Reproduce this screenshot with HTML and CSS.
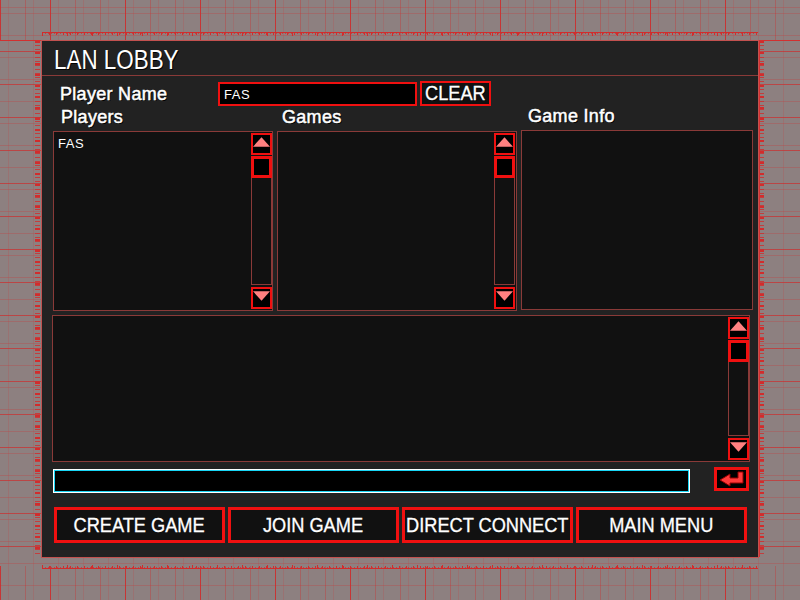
FILE: index.html
```html
<!DOCTYPE html>
<html lang="en">
<head>
    <meta charset="UTF-8">
    <title>LAN Lobby</title>
    <link rel="stylesheet" href="styles.css">
</head>
<body>
    <div class="strip strip-top"></div>
    <div class="strip strip-bottom"></div>
    <div class="strip strip-left"></div>
    <div class="strip strip-right"></div>
    <div class="ruler ruler-top"></div>
    <div class="ruler ruler-bottom"></div>
    <div class="ruler-v ruler-left"></div>
    <div class="ruler-v ruler-right"></div>

    <main class="lobby">
        <header class="title-bar"><h1>LAN LOBBY</h1></header>

        <div class="name-row">
            <label class="label name-label">Player Name</label>
            <div class="name-field">FAS</div>
            <button class="clear-btn"><span class="squeeze">CLEAR</span></button>
        </div>

        <div class="columns">
            <section class="col col-players">
                <h2 class="label">Players</h2>
                <div class="listbox">
                    <div class="list-text">FAS</div>
                    <div class="scroll">
                        <div class="arrow"><svg width="18" height="10" viewBox="0 0 18 10"><path d="M9 0 18 10H0Z"/></svg></div>
                        <div class="thumb"></div>
                        <div class="track"></div>
                        <div class="arrow arrow-down"><svg width="18" height="10" viewBox="0 0 18 10"><path d="M0 0H18L9 10Z"/></svg></div>
                    </div>
                </div>
            </section>
            <section class="col col-games">
                <h2 class="label">Games</h2>
                <div class="listbox">
                    <div class="list-text"></div>
                    <div class="scroll">
                        <div class="arrow"><svg width="18" height="10" viewBox="0 0 18 10"><path d="M9 0 18 10H0Z"/></svg></div>
                        <div class="thumb"></div>
                        <div class="track"></div>
                        <div class="arrow arrow-down"><svg width="18" height="10" viewBox="0 0 18 10"><path d="M0 0H18L9 10Z"/></svg></div>
                    </div>
                </div>
            </section>
            <section class="col col-info">
                <h2 class="label">Game Info</h2>
                <div class="listbox"></div>
            </section>
        </div>

        <div class="listbox chat-log">
            <div class="list-text"></div>
            <div class="scroll">
                <div class="arrow"><svg width="18" height="10" viewBox="0 0 18 10"><path d="M9 0 18 10H0Z"/></svg></div>
                <div class="thumb"></div>
                <div class="track"></div>
                <div class="arrow arrow-down"><svg width="18" height="10" viewBox="0 0 18 10"><path d="M0 0H18L9 10Z"/></svg></div>
            </div>
        </div>

        <div class="chat-row">
            <div class="chat-input"></div>
            <button class="send-btn">
                <svg width="26" height="16" viewBox="0 0 26 16"><path d="M24 1V12H11V15L1 9 11 3V7H19V1Z" fill="#ff3a3a" stroke="#900"/></svg>
            </button>
        </div>

        <nav class="menu">
            <button class="menu-btn"><span class="squeeze">CREATE GAME</span></button>
            <button class="menu-btn"><span class="squeeze">JOIN GAME</span></button>
            <button class="menu-btn"><span class="squeeze">DIRECT CONNECT</span></button>
            <button class="menu-btn"><span class="squeeze">MAIN MENU</span></button>
        </nav>
    </main>
</body>
</html>
```
FILE: styles.css
```css
* {
    box-sizing: border-box;
}
html, body {
    margin: 0;
    height: 600px;
    overflow: hidden;
}
body {
    position: relative;
    padding: 41px 42px 43px;
    font-family: "Liberation Sans", Arial, sans-serif;
    background-color: #8d8080;
    background-image:
        repeating-linear-gradient(90deg, rgba(200, 60, 60, 0.2) 0 1px, transparent 1px 25px),
        repeating-linear-gradient(0deg, rgba(200, 60, 60, 0.3) 0 1px, transparent 1px 22px);
    background-position: 8px 0, 0 8px;
}

/* grid strips outside the panel */
.strip {
    position: absolute;
}
.strip-top, .strip-bottom {
    left: 0;
    width: 800px;
    background-image:
        repeating-linear-gradient(90deg, rgba(205, 45, 45, 0.85) 0 1px, transparent 1px 75px),
        repeating-linear-gradient(90deg, rgba(205, 45, 45, 0.35) 0 1px, transparent 1px 25px);
    background-position: 50px 0, 0 0;
}
.strip-top {
    top: 0;
    height: 41px;
    border-bottom: 1px solid #d23030;
}
.strip-bottom {
    top: 566px;
    height: 34px;
}
.strip-left, .strip-right {
    top: 41px;
    height: 525px;
    width: 42px;
    background-image: repeating-linear-gradient(180deg, rgba(205, 45, 45, 0.7) 0 1px, transparent 1px 33px);
    background-position: 0 10px;
}
.strip-left {
    left: 0;
}
.strip-right {
    left: 759px;
}

/* tick strips round the panel */
.ruler {
    position: absolute;
    left: 42px;
    width: 716px;
    height: 4px;
    background-image:
        linear-gradient(#d22c2c, #d22c2c),
        repeating-linear-gradient(90deg, #d22c2c 0 1px, transparent 1px 25px),
        repeating-linear-gradient(90deg, #d22c2c 0 1px, transparent 1px 7px),
        repeating-linear-gradient(90deg, rgba(210, 44, 44, 0.7) 0 1px, transparent 1px 3px);
    background-repeat: no-repeat;
    background-size: 100% 1px, 100% 4px, 100% 3px, 100% 2px;
}
.ruler-top {
    top: 32px;
}
.ruler-bottom {
    top: 565px;
    transform: scaleY(-1);
}
.ruler-v {
    position: absolute;
    top: 41px;
    width: 5px;
    height: 516px;
    background-image:
        repeating-linear-gradient(180deg, #d22c2c 0 2px, transparent 2px 11px),
        repeating-linear-gradient(180deg, rgba(210, 44, 44, 0.8) 0 1px, transparent 1px 4px);
}
.ruler-left {
    left: 35px;
}
.ruler-right {
    left: 759px;
    border-left: 1px solid #d23030;
}

.lobby {
    position: relative;
    height: 516px;
    background: #222;
    box-shadow: 0 0 0 1px #c2514f;
    display: flex;
    flex-direction: column;
}

.title-bar {
    height: 35px;
    border-bottom: 1px solid #8a3a38;
    padding-left: 12px;
}
.title-bar h1 {
    display: inline-block;
    margin: 0;
    color: #fff;
    font-size: 27px;
    font-weight: normal;
    line-height: 38px;
    white-space: nowrap;
    transform: scaleX(0.83);
    transform-origin: left;
    text-shadow: 1px 1px 0 #000;
}

.label {
    margin: 0;
    color: #fff;
    font-size: 18px;
    font-weight: normal;
    line-height: 20px;
    letter-spacing: 0.3px;
    -webkit-text-stroke: 0.5px #fff;
    text-shadow: 1px 1px 0 #000;
}

.squeeze {
    display: inline-block;
    white-space: nowrap;
    transform: scaleX(0.91);
    -webkit-text-stroke: 0.3px #fff;
}

.name-row {
    display: flex;
    align-items: center;
    height: 25px;
    margin-top: 5px;
    padding-left: 18px;
}
.name-label {
    width: 158px;
}
.name-field {
    width: 199px;
    height: 24px;
    border: 2px solid #f01010;
    background: #000;
    color: #fff;
    font-size: 13px;
    line-height: 21px;
    letter-spacing: 0.6px;
    padding-left: 4px;
}
.clear-btn, .menu-btn {
    display: flex;
    align-items: center;
    justify-content: center;
    padding: 0;
    border: 2px solid #f01010;
    background: #111;
    color: #fff;
    font-family: inherit;
    font-size: 20px;
}
.clear-btn {
    width: 71px;
    height: 25px;
    margin-left: 3px;
    text-shadow: 1px 1px 0 #000;
}

.columns {
    display: flex;
    padding: 1px 0 0 11px;
    gap: 4px;
}
.col {
    display: flex;
    flex-direction: column;
}
.col-players {
    width: 220px;
}
.col-players .label {
    margin-left: 8px;
}
.col-games {
    width: 240px;
}
.col-games .label {
    margin-left: 5px;
}
.col-games .scroll {
    margin-right: 1px;
}
.col-info {
    width: 232px;
    margin-top: -1px;
}
.col-info .label {
    margin-left: 7px;
}

.listbox {
    display: flex;
    height: 180px;
    margin-top: 4px;
    border: 1px solid #8a3a38;
    background: #111;
}
.list-text {
    flex: 1;
    padding: 4px;
    color: #fff;
    font-size: 13px;
    line-height: 15px;
    letter-spacing: 0.6px;
}

.scroll {
    display: flex;
    flex-direction: column;
    width: 21px;
    margin: 1px 0;
}
.arrow {
    flex: none;
    display: flex;
    justify-content: center;
    height: 22px;
    padding-top: 2px;
    border: 2px solid #f01010;
    background: #000;
}
.arrow svg {
    fill: #ff8080;
}
.arrow-down {
    margin-top: 2px;
}
.thumb {
    flex: none;
    height: 22px;
    margin-top: 1px;
    border: 3px solid #f01010;
    background: #000;
}
.track {
    flex: 1;
    border: 1px solid #8a3a38;
    border-top: 0;
}

.chat-log {
    width: 698px;
    height: 147px;
    margin: 4px 0 0 10px;
}

.chat-row {
    display: flex;
    justify-content: space-between;
    align-items: flex-start;
    width: 696px;
    margin: 5px 0 0 11px;
}
.chat-input {
    width: 637px;
    height: 24px;
    margin-top: 2px;
    border: 2px solid #19d5f5;
    outline: 1px solid #fff;
    outline-offset: -1px;
    background: #000;
}
.send-btn {
    display: flex;
    align-items: center;
    justify-content: center;
    width: 35px;
    height: 24px;
    padding: 0;
    border: 3px solid #f01010;
    background: #000;
}

.menu {
    display: flex;
    gap: 3px;
    margin: 14px 0 0 12px;
}
.menu-btn {
    width: 171px;
    height: 36px;
    border-width: 3px;
}
```
